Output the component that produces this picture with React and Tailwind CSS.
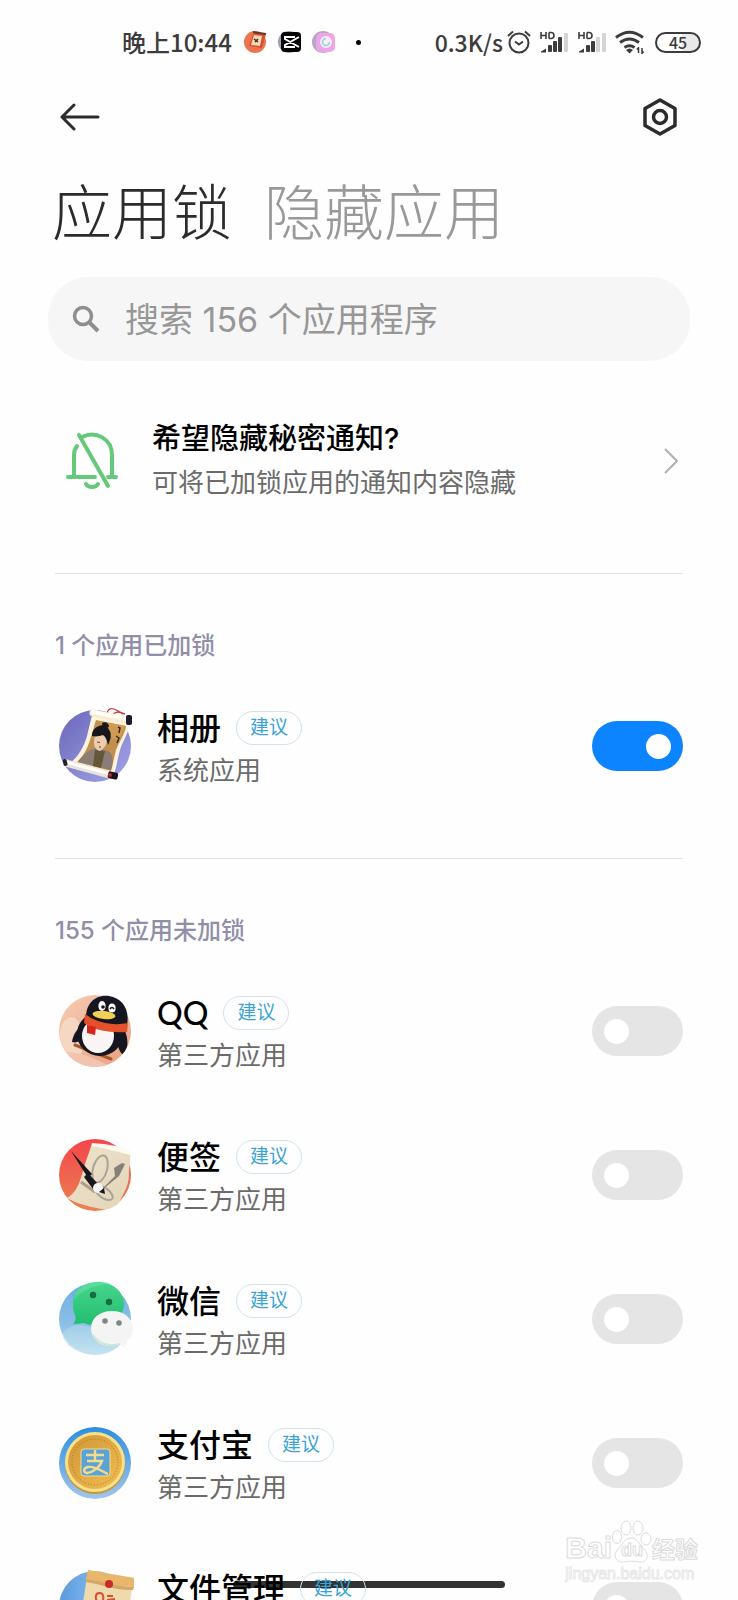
import { useState } from 'react'

const APPS = [
  { id: 'gallery', name: '相册', kind: '系统应用', locked: true, Icon: GalleryIcon },
  { id: 'qq', name: 'QQ', kind: '第三方应用', locked: false, Icon: QQIcon },
  { id: 'notes', name: '便签', kind: '第三方应用', locked: false, Icon: NotesIcon },
  { id: 'wechat', name: '微信', kind: '第三方应用', locked: false, Icon: WechatIcon },
  { id: 'alipay', name: '支付宝', kind: '第三方应用', locked: false, Icon: AlipayIcon },
  { id: 'files', name: '文件管理', kind: '第三方应用', locked: false, Icon: FilesIcon },
]

function GalleryIcon() {
  return (
    <svg viewBox="0 0 80 80" className="size-20 shrink-0" aria-hidden="true">
      <defs>
        <linearGradient id="gal" x1="0" y1="0" x2="1" y2="1">
          <stop offset="0" stopColor="#6a68b8" />
          <stop offset="1" stopColor="#a3a3ea" />
        </linearGradient>
      </defs>
      <circle cx="40" cy="40" r="36" fill="url(#gal)" />
      <path d="M52 7c1-4 4-5 7-4s6 4 11 5M57 9c3-3 7-4 11-1" fill="none" stroke="#c8403c" strokeWidth="1.3" />
      <path d="M38 5 75 13c1 9-5 18-9 28-3 8-4 20-8 30L14 58c9-7 15-17 18-28 2-8 4-17 6-25Z" fill="#fbf2dc" />
      <path d="M41 14 71 20c-1 8-7 16-10 24-2 7-3 15-5 21L22 56c7-6 11-15 14-25 2-6 3-11 5-17Z" fill="#c18f4f" />
      <path d="M44 15 70 20l-6 15-8-4Z" fill="#d09a55" />
      <path d="M63 21l2 1-1 5M61 30l3 2-2 5" fill="none" stroke="#3b2a1c" strokeWidth="1.5" />
      <path d="M23 56c4-6 10-12 18-14l12 3c5 3 6 10 3 19Z" fill="#8b7d76" />
      <path d="M40 44l10 1-4 17-8-2Z" fill="#665638" />
      <path d="M40 26c5-3 12 0 12 6 0 6-2 10-7 13-4-1-6-4-6-9Z" fill="#eccdb0" />
      <path d="M37 30c0-5 2-8 7-10 4-2 9 0 10 4 3 3 2 9-1 15-1-4-2-8-5-10-3 1-7 2-11 1Z" fill="#17161b" />
      <path d="M47 17c3-2 7 0 7 4l-6 2Z" fill="#17161b" />
      <path d="M42 36l3 .5M46 41l-2 0" stroke="#6b3a2c" strokeWidth="1" />
      <path d="M38 7 72 14" stroke="#f6ecd4" strokeWidth="7" strokeLinecap="round" />
      <path d="M38 6 72 13" stroke="#fffdf6" strokeWidth="4" strokeLinecap="round" />
      <path d="M11 57 55 69" stroke="#e9e2dc" strokeWidth="7" strokeLinecap="round" />
      <path d="M11 56 55 68" stroke="#fffdf6" strokeWidth="3" strokeLinecap="round" />
      <rect x="71" y="9" width="6" height="10" rx="2" fill="#1d1b2c" />
      <rect x="8" y="53" width="4" height="7" rx="2" transform="rotate(-15 10 56)" fill="#25202c" />
      <rect x="53" y="66" width="10" height="7" rx="2" transform="rotate(12 58 69)" fill="#1d141b" />
      <circle cx="55" cy="69" r="2" fill="#b03230" />
    </svg>
  )
}

function QQIcon() {
  return (
    <svg viewBox="0 0 80 80" className="size-20 shrink-0" aria-hidden="true">
      <defs>
        <linearGradient id="qq" x1="0" y1="0" x2="1" y2="1">
          <stop offset="0" stopColor="#f6cdb8" />
          <stop offset="1" stopColor="#e79f7a" />
        </linearGradient>
        <clipPath id="qqc">
          <circle cx="40" cy="40" r="36" />
        </clipPath>
      </defs>
      <g clipPath="url(#qqc)">
        <rect width="80" height="80" fill="url(#qq)" />
        <ellipse cx="16" cy="50" rx="12" ry="24" fill="#f6d8c2" />
        <path d="M4 62c14-4 34 4 52 14l-16 6Z" fill="#f2c4b0" />
        <path d="M20 54l36 14" stroke="#a9562f" strokeWidth="3" strokeLinecap="round" />
        <path d="M31 32c-8 4-13 11-14 19 6 2 10-3 14-8Z" fill="#15161f" />
        <path d="M67 35c6 8 7 19 3 30-6-3-7-9-8-16Z" fill="#15161f" />
        <ellipse cx="45" cy="43" rx="23" ry="22" fill="#15161f" />
        <ellipse cx="43" cy="45" rx="16" ry="17" fill="#f8f5f4" />
      </g>
      <path d="M31 26C31 12 41 3 54 5s21 13 18 29c-14 1-28-1-41-8Z" fill="#15161f" />
      <path d="M30 23c12 9 28 12 43 9l-1 9c-16 1-31-1-43-9Z" fill="#e4512b" />
      <path d="M32 34l9 2-1 8-8-2Z" fill="#d8241f" />
      <ellipse cx="47" cy="15" rx="3.6" ry="5" fill="#fff" />
      <ellipse cx="57" cy="17" rx="3.6" ry="4.5" fill="#fff" />
      <circle cx="48" cy="16" r="1.8" fill="#15161f" />
      <path d="M55 18q2-3 4 0" fill="none" stroke="#15161f" strokeWidth="1.5" />
      <ellipse cx="49" cy="24" rx="11.5" ry="4" transform="rotate(6 49 24)" fill="#f2cf55" />
    </svg>
  )
}

function NotesIcon() {
  return (
    <svg viewBox="0 0 80 80" className="size-20 shrink-0" aria-hidden="true">
      <defs>
        <linearGradient id="note" x1="0" y1="0" x2="0" y2="1">
          <stop offset="0" stopColor="#f5454c" />
          <stop offset="1" stopColor="#e98350" />
        </linearGradient>
        <linearGradient id="paper" x1="0" y1="0" x2="1" y2="1">
          <stop offset="0" stopColor="#efe4cc" />
          <stop offset="1" stopColor="#e2d4b8" />
        </linearGradient>
        <clipPath id="nc">
          <path d="M0 0h80v44c-6 18-18 32-40 32A36 36 0 0 1 4 40Z" />
        </clipPath>
      </defs>
      <circle cx="40" cy="40" r="36" fill="url(#note)" />
      <g clipPath="url(#nc)">
        <path d="M37 8c12 4 24 5 38 8 1 9-1 14-1 24 0 12-8 22-14 36-16-2-34-5-48-13 11-6 13-18 17-30 2-9 6-17 8-25Z" fill="url(#paper)" />
      </g>
      <path d="M37 8c12 1 23 2 38 7v5C62 17 50 13 37 11Z" fill="#fffaf0" />
      <ellipse cx="45" cy="34" rx="7" ry="14" transform="rotate(16 45 34)" fill="none" stroke="#aaa397" strokeWidth="2" />
      <ellipse cx="49" cy="58" rx="10" ry="5" transform="rotate(35 49 58)" fill="none" stroke="#aaa397" strokeWidth="2" />
      <path d="M45 56 60 41l-1-8 8-5 3 1-6 12-17 14Z" fill="#85807a" />
      <path d="M26 47 40 57" stroke="#ac9e88" strokeWidth="3" />
      <path d="M16 16 37 39l-4 4Z" fill="#19171c" />
      <path d="M33 38 43 49l-5 5-9-12Z" fill="#19171c" />
      <circle cx="43" cy="53" r="5" fill="#f6f6f5" />
      <path d="M44 57l5-4 1 6Z" fill="#19171c" />
    </svg>
  )
}

function WechatIcon() {
  return (
    <svg viewBox="0 0 80 80" className="size-20 shrink-0" aria-hidden="true">
      <defs>
        <linearGradient id="wxb" x1="0" y1="0" x2="0" y2="1">
          <stop offset="0" stopColor="#6aaee3" />
          <stop offset="0.6" stopColor="#8dc0e6" />
          <stop offset="1" stopColor="#d3ebf5" />
        </linearGradient>
        <linearGradient id="wxg" x1="0" y1="0" x2="0" y2="1">
          <stop offset="0" stopColor="#48d68d" />
          <stop offset="1" stopColor="#1fbd6d" />
        </linearGradient>
      </defs>
      <circle cx="40" cy="40" r="36" fill="url(#wxb)" />
      <path d="M7 55c10-12 20-10 31-6 6 9 20 12 30 14-8 10-22 15-36 12C16 71 9 64 7 55Z" fill="#b5dcec" opacity="0.5" />
      <path d="M43 3c15 0 26 10 26 22S58 47 45 47c-7 0-11-1-16-3-3 0-6 1-11 1 3-3 3-6 2-9-2-4-2-7-2-12C18 12 28 3 43 3Z" fill="url(#wxg)" />
      <path d="M40 3c-12 1-20 8-21 18 8-10 20-16 38-16-5-2-11-3-17-2Z" fill="#7ee6af" opacity="0.4" />
      <circle cx="38" cy="16" r="3.2" fill="#176a43" />
      <circle cx="54" cy="23" r="3.2" fill="#176a43" />
      <path d="M57 32c12 0 21 7 21 18 0 5-2 9-6 12 0 3-1 5-4 8 0-3 0-4-3-4-17 4-29-4-29-17 0-10 9-17 21-17Z" fill="#f3f4f3" />
      <path d="M38 56c5 9 17 12 27 9" fill="none" stroke="#cfe6da" strokeWidth="2" />
      <circle cx="50" cy="42" r="2.8" fill="#7f8684" />
      <circle cx="64" cy="44" r="2.8" fill="#7f8684" />
    </svg>
  )
}

function AlipayIcon() {
  return (
    <svg viewBox="0 0 80 80" className="size-20 shrink-0" aria-hidden="true">
      <defs>
        <linearGradient id="ali" x1="0" y1="0" x2="0" y2="1">
          <stop offset="0" stopColor="#2c8ee0" />
          <stop offset="1" stopColor="#a0c6ea" />
        </linearGradient>
        <linearGradient id="coin" x1="0" y1="0" x2="1" y2="1">
          <stop offset="0" stopColor="#cf9637" />
          <stop offset="1" stopColor="#f2bd50" />
        </linearGradient>
      </defs>
      <circle cx="40" cy="40" r="36" fill="url(#ali)" />
      <circle cx="40" cy="41" r="30" fill="#c8963c" />
      <circle cx="40" cy="39" r="30" fill="#f7e08a" />
      <circle cx="40" cy="39" r="27" fill="url(#coin)" />
      <circle cx="40" cy="39" r="23" fill="none" stroke="#a8772b" strokeWidth="1" strokeDasharray="1 2" />
      <rect x="26" y="26" width="29" height="27" rx="3" fill="#5ba3d6" stroke="#f3dc8d" strokeWidth="1" />
      <path d="M31 32h18M40 27v11M32 38h15c-2 6-8 11-15 12-4 0-4-5 1-6 6-1 12 3 20 7" fill="none" stroke="#f3dc8d" strokeWidth="2.4" />
    </svg>
  )
}

function FilesIcon() {
  return (
    <svg viewBox="0 0 80 80" className="size-20 shrink-0" aria-hidden="true">
      <defs>
        <linearGradient id="fil" x1="0" y1="0" x2="1" y2="0">
          <stop offset="0" stopColor="#5c9be0" />
          <stop offset="1" stopColor="#a3cdf2" />
        </linearGradient>
      </defs>
      <circle cx="40" cy="40" r="36" fill="url(#fil)" />
      <path d="M33 3 79 11 68 74 24 62Z" fill="#f0d9ad" />
      <path d="M33 3 79 11 79 20 56 18 31 12Z" fill="#e9b76b" />
      <path d="M31 12c16 2 31 8 48 8l-1 3c-17 1-32-6-47-8Z" fill="#d2a769" />
      <circle cx="54" cy="17" r="4" fill="#c92a25" />
      <path d="M46 40c-6-6-7-13-2-14s6 6 1 15M52 33l8-1M52 37l10 0M52 29l6 0" fill="none" stroke="#d9502f" strokeWidth="2" />
    </svg>
  )
}

function SignalIcon({ bars }) {
  return (
    <svg viewBox="0 0 30 24" className="h-6 w-[30px]" aria-hidden="true">
      <path d="M2 2v7M7 2v7M2 5.5h5M10 2.5v6M10 2.5h2q3 0 3 3t-3 3h-2" fill="none" stroke="#3c3c3c" strokeWidth="1.6" />
      <path d="M2 22.5v-1l5-3v4Z" fill="#3c3c3c" />
      {[8, 13, 18, 24].map((x, i) => (
        <rect key={x} x={x + 1} y={15 - i * 4} width="4" height={7 + i * 4} rx="1" fill={i < bars ? '#3c3c3c' : '#d4d4d4'} />
      ))}
    </svg>
  )
}

function StatusBar() {
  return (
    <div className="flex h-21 items-center justify-between pr-[37px] pl-[122px] font-['Noto_Sans_CJK_SC',sans-serif] text-2xl font-medium text-[#3c3c3c]">
      <div className="flex items-center">
        <span>晚上10:44</span>
        <svg viewBox="0 0 24 24" className="ml-3 size-6" aria-hidden="true">
          <circle cx="11" cy="12" r="11" fill="#ea7650" />
          <path d="M10 2 22 4 18 18 5 16Z" fill="#d4532f" />
          <path d="M10 5 18 6 16 16 7 15Z" fill="#f6d9b4" />
          <path d="M10 9l4 3M14 9l-3 3" stroke="#4b2b1d" strokeWidth="1.5" />
          <path d="M9 1 22 3v2L9 3Z" fill="#69352b" />
        </svg>
        <svg viewBox="0 0 24 24" className="ml-[10px] size-6" aria-hidden="true">
          <circle cx="11" cy="12" r="11" fill="#9d9fb8" />
          <rect x="3" y="2" width="20" height="20" rx="4" fill="#050505" />
          <path d="M17 7H7v2l14 8M17 17H7v-2l14-8" fill="none" stroke="#fff" strokeWidth="2" />
        </svg>
        <svg viewBox="0 0 24 24" className="ml-[10px] size-6" aria-hidden="true">
          <circle cx="11" cy="12" r="11" fill="#b7a4c9" />
          <rect x="4" y="3" width="19" height="19" rx="5" fill="#eba6e6" />
          <circle cx="14" cy="12" r="6" fill="#f6ecf8" />
          <path d="M14 8.5a3.5 3.5 0 1 0 3.5 3.5" fill="none" stroke="#8ed8cc" strokeWidth="1.5" />
        </svg>
        <span className="ml-5 size-[5px] rounded-full bg-black" />
      </div>
      <div className="flex items-center">
        <span className="text-[23px]">0.3K/s</span>
        <svg viewBox="0 0 24 24" className="ml-1 size-6" fill="none" stroke="#3c3c3c" strokeWidth="2" aria-hidden="true">
          <circle cx="12" cy="13" r="9.5" />
          <path d="M1 6 6 1.5M23 6l-5-4.5M8 11.5l4 3 4-3" />
        </svg>
        <span className="ml-2">
          <SignalIcon bars={3} />
        </span>
        <span className="ml-2">
          <SignalIcon bars={2} />
        </span>
        <svg viewBox="0 0 30 24" className="ml-2 h-6 w-[30px]" fill="none" stroke="#3c3c3c" strokeWidth="3" aria-hidden="true">
          <path d="M1 7.5Q14.5-3 28 7.5M5 12.5q9.5-7 19 0M9.5 17.5q5-3.500 10 0" />
          <path d="M11 20q3.5-3 7 0l-3.5 3.5Z" fill="#3c3c3c" stroke="none" />
          <path d="M23.5 17v6M27 18v6M22 19.5l1.5-2M28.5 21.5l-1.5 2" strokeWidth="1.5" />
        </svg>
        <span className="ml-[10px] flex h-[21px] w-[46px] items-center justify-center rounded-full border-2 border-[#3c3c3c] bg-[linear-gradient(90deg,#fff_60%,#e9e9e9_60%)] text-base">
          45
        </span>
      </div>
    </div>
  )
}

function AppRow({ app, onToggle }) {
  const { Icon } = app
  return (
    <li className="flex h-36 items-center">
      <Icon />
      <div className="ml-[22px] flex-1 pt-2">
        <div className="flex h-[42px] items-center gap-[15px]">
          <label htmlFor={app.id} className="font-['Lato','Noto_Sans_CJK_SC',sans-serif] text-[32px] font-medium text-black">
            {app.name}
          </label>
          <span className="flex h-[34px] items-center rounded-full border border-[#d3e3ee] px-[13px] text-[19px] text-[#3ba3d6]">
            建议
          </span>
        </div>
        <p className="text-[26px] leading-[44px] text-[#6b6b6b]">{app.kind}</p>
      </div>
      <input
        id={app.id}
        type="checkbox"
        role="switch"
        checked={app.locked}
        onChange={() => onToggle(app.id)}
        className="flex h-[50px] w-[91px] shrink-0 appearance-none items-center rounded-full bg-[#e5e5e5] px-3 before:size-[25px] before:rounded-full before:bg-white checked:justify-end checked:bg-[#0d84ff]"
      />
    </li>
  )
}

function AppSection({ title, apps, onToggle }) {
  return (
    <section className="mx-[7px] border-t border-[#e2e2e2] pt-14 pb-10">
      <h2 className="mb-3 text-2xl leading-8 font-medium text-[#918ea8]">{title}</h2>
      <ul>
        {apps.map((app) => (
          <AppRow key={app.id} app={app} onToggle={onToggle} />
        ))}
      </ul>
    </section>
  )
}

function Watermark() {
  return (
    <div className="pointer-events-none absolute right-10 bottom-4 font-['Liberation_Sans',sans-serif]" aria-hidden="true">
      <div className="flex items-end text-[30px] leading-8 font-bold text-white [-webkit-text-stroke:1px_#dcdcdc]">
        <span>Bai</span>
        <span className="relative flex h-11 w-10 items-end justify-center">
          <svg viewBox="0 0 40 44" className="absolute inset-0" fill="#fff" stroke="#dcdcdc">
            <ellipse cx="5" cy="17" rx="4.5" ry="6.5" />
            <ellipse cx="14" cy="8" rx="5" ry="7" />
            <ellipse cx="26" cy="8" rx="5" ry="7" />
            <ellipse cx="34" cy="19" rx="5" ry="6" />
            <path d="M19 18c6 0 8 6 13 11 7 7 2 14-5 13-5-1-10-1-15 0C4 43 0 35 6 29c5-5 7-11 13-11Z" />
          </svg>
          <span className="relative text-lg leading-7">du</span>
        </span>
        <span className="font-['Noto_Sans_CJK_SC',sans-serif] text-[23px]">经验</span>
      </div>
      <div className="text-base leading-5 text-white [-webkit-text-stroke:1px_#e8e8e8]">jingyan.baidu.com</div>
    </div>
  )
}

export default function App() {
  const [apps, setApps] = useState(APPS)
  const [tab, setTab] = useState('lock')
  const [query, setQuery] = useState('')

  const locked = apps.filter((a) => a.locked)
  const unlocked = apps.filter((a) => !a.locked)

  const toggle = (id) => {
    setApps((prev) => prev.map((a) => (a.id === id ? { ...a, locked: !a.locked } : a)))
  }

  return (
    <div className="relative h-screen overflow-hidden bg-[#fefefe] font-['Inter','Noto_Sans_CJK_SC',sans-serif]">
      <div className="absolute bottom-3 left-1/2 h-[7px] w-[272px] -translate-x-1/2 rounded-full bg-[#333]" />

      <div className="relative">
        <StatusBar />

        <header className="flex h-[65px] items-center justify-between px-[60px]">
          <button type="button" aria-label="返回">
            <svg viewBox="0 0 40 28" className="h-7 w-10" fill="none" stroke="#2c2c2c" strokeWidth="3" strokeLinecap="round" strokeLinejoin="round">
              <path d="M38 14H2M14 2 2 14l12 12" />
            </svg>
          </button>
          <button type="button" aria-label="设置">
            <svg viewBox="0 0 36 38" className="h-[38px] w-9" fill="none" stroke="#2c2c2c" strokeWidth="3.5" strokeLinejoin="round">
              <path d="M18 2 33 10.5v17L18 36 3 27.5v-17Z" />
              <circle cx="18" cy="19" r="6.5" />
            </svg>
          </button>
        </header>

        <main className="px-12">
          <div role="tablist" className="flex gap-8 px-1 py-8 text-[60px] leading-[64px] font-light">
            <button
              type="button"
              role="tab"
              aria-selected={tab === 'lock'}
              onClick={() => setTab('lock')}
              className="text-[#999] aria-selected:text-[#2b2b2b]"
            >
              应用锁
            </button>
            <button
              type="button"
              role="tab"
              aria-selected={tab === 'hide'}
              onClick={() => setTab('hide')}
              className="text-[#999] aria-selected:text-[#2b2b2b]"
            >
              隐藏应用
            </button>
          </div>

          <label className="flex h-21 items-center rounded-[40px] bg-[#f6f6f6] px-6">
            <svg viewBox="0 0 28 28" className="size-7" fill="none" stroke="#8e8e8e" strokeWidth="3.5" aria-label="搜索">
              <circle cx="11" cy="11" r="8.5" />
              <path d="m17 17 9 9" strokeWidth="4" />
            </svg>
            <input
              type="text"
              value={query}
              onChange={(e) => setQuery(e.target.value)}
              placeholder="搜索 156 个应用程序"
              className="ml-[25px] min-w-0 flex-1 bg-transparent text-[34px] outline-none placeholder:text-[#979797]"
            />
          </label>

          <a href="#notifications" className="flex items-center pt-14 pr-3 pb-17 pl-[17px]">
            <svg viewBox="0 0 54 60" className="h-[60px] w-[54px] shrink-0" fill="none" stroke="#65c97a" strokeWidth="4" strokeLinecap="round">
              <path d="M3 46h27M9 46V24q0-5 3-9M17 6C31-1 47 8 47 24v22M43 46h8" />
              <path d="M14 4 43 55" />
              <path d="M21 53a6.5 5 0 0 0 12 0" />
            </svg>
            <div className="ml-[33px] flex-1">
              <div className="text-[29px] leading-[44px] font-medium text-black">希望隐藏秘密通知?</div>
              <div className="text-[26px] leading-[44px] text-[#6b6b6b]">可将已加锁应用的通知内容隐藏</div>
            </div>
            <svg viewBox="0 0 14 26" className="h-[26px] w-3.5" fill="none" stroke="#b0b0b0" strokeWidth="2">
              <path d="m1 1 12 12L1 25" />
            </svg>
          </a>

          <AppSection title={`${locked.length} 个应用已加锁`} apps={locked} onToggle={toggle} />
          <AppSection title={`${156 - locked.length} 个应用未加锁`} apps={unlocked} onToggle={toggle} />
        </main>
      </div>

      <Watermark />
    </div>
  )
}
